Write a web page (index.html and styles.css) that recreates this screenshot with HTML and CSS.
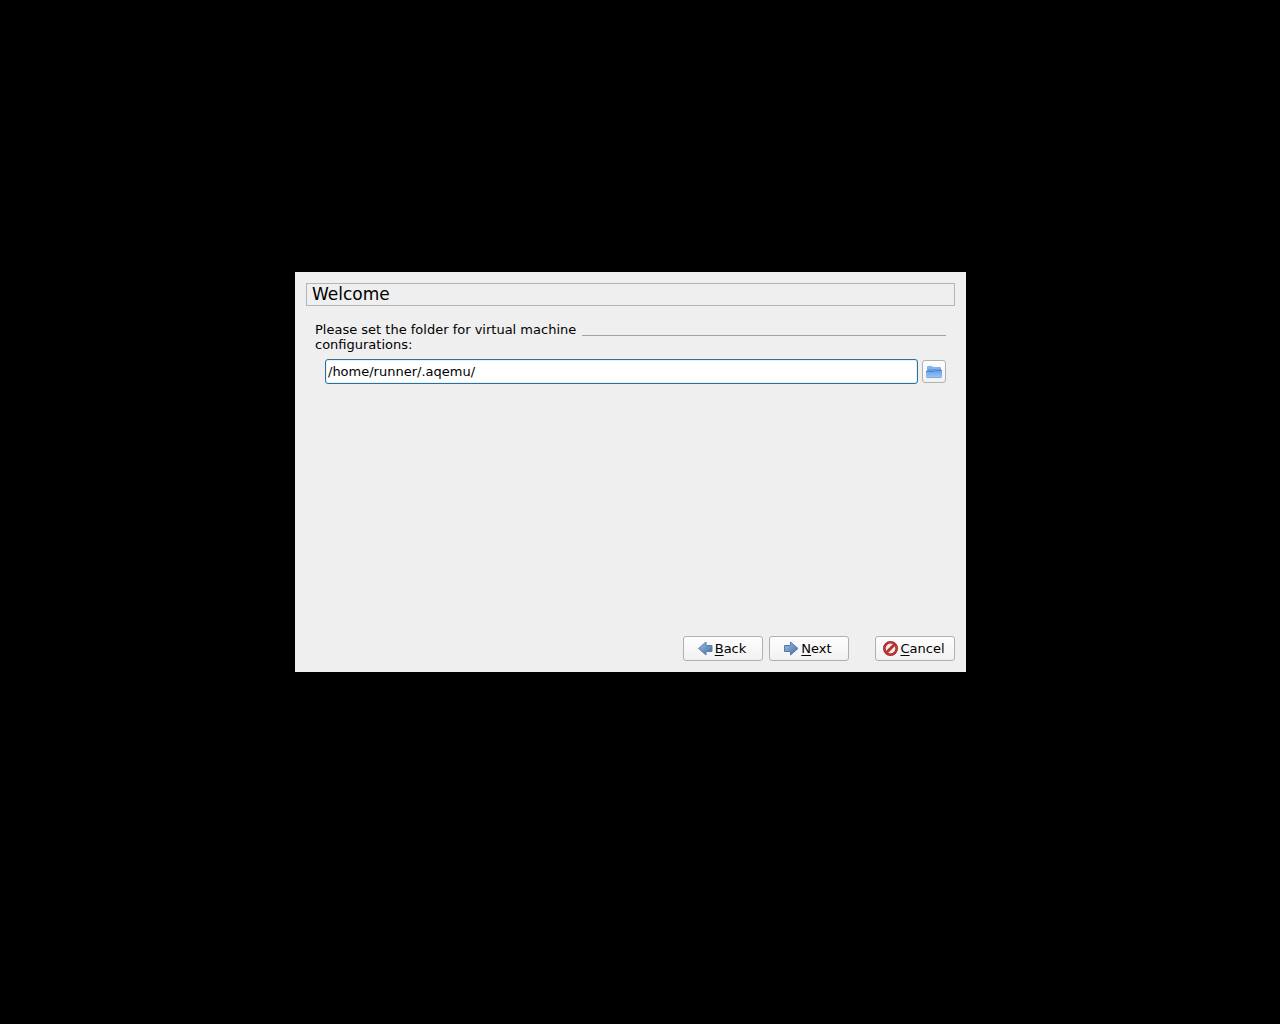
FILE: index.html
```html
<!DOCTYPE html>
<html lang="en">
<head>
<meta charset="utf-8">
<meta name="viewport" content="width=device-width, initial-scale=1">
<title>Welcome</title>
<link rel="stylesheet" href="styles.css">
</head>
<body>
<form class="wizard">
  <h1 class="title">Welcome</h1>
  <main class="page">
    <div class="caption">
      <label class="caption-text" for="folder">Please set the folder for virtual machine configurations:</label>
      <span class="rule"></span>
    </div>
    <div class="path-row">
      <input class="path" id="folder" type="text" value="/home/runner/.aqemu/">
      <button class="button browse" type="button" aria-label="Browse">
        <svg class="icon" viewBox="0 0 16 16" aria-hidden="true">
          <defs>
            <linearGradient id="folder-fill" x1="0" y1="0" x2="0" y2="1"><stop offset="0" stop-color="#6ba2e6"/><stop offset="1" stop-color="#9dc8fa"/></linearGradient>
          </defs>
          <path d="M1 13V3q0-1 1-1h4l1 1h7q1 0 1 1v9z" fill="#84b4ee"/>
          <path d="M1 5h14v2H1z" fill="#6a9ee0"/>
          <path d="M0 8h7l1-1h8v6q0 1-1 1H1q-1 0-1-1z" fill="url(#folder-fill)"/>
          <path d="M0 7.500h7.500l1-1H16" fill="none" stroke="#4c83cc"/>
          <path d="M1 13.500h14" stroke="#7eaae2"/>
        </svg>
      </button>
    </div>
  </main>
  <footer class="actions">
    <button class="button" type="button">
      <svg class="icon" viewBox="0 0 16 16" aria-hidden="true">
        <defs>
          <linearGradient id="arrow-fill" x1="0" y1="0" x2="1" y2="1"><stop offset="0" stop-color="#a4c2e2"/><stop offset=".5" stop-color="#6f97c6"/><stop offset="1" stop-color="#3e659b"/></linearGradient>
        </defs>
        <path d="M.5 7.500l7.500-6.500V4.500h6v6h-6V14z" fill="url(#arrow-fill)" stroke="#5c7fa8" stroke-linejoin="round"/>
      </svg>
      <span><u>B</u>ack</span>
    </button>
    <button class="button" type="button">
      <svg class="icon" viewBox="0 0 16 16" aria-hidden="true">
        <path d="M14 7.500L6.500 1V4.500h-6v6h6V14z" fill="url(#arrow-fill)" stroke="#5c78a8" stroke-linejoin="round"/>
      </svg>
      <span><u>N</u>ext</span>
    </button>
    <button class="button cancel" type="button">
      <svg class="icon" viewBox="0 0 16 16" aria-hidden="true">
        <circle cx="7.500" cy="7.500" r="6.200" fill="#f6ecec" stroke="#a5201f" stroke-width="2.600"/>
        <path d="M3.500 11.500l8-8" stroke="#bb302e" stroke-width="2.800"/>
        <circle cx="7.500" cy="7.500" r="6.200" fill="none" stroke="#cc4a47" stroke-width=".8"/>
      </svg>
      <span><u>C</u>ancel</span>
    </button>
  </footer>
</form>
</body>
</html>
```
FILE: styles.css
```css
* {
  box-sizing: border-box;
}

body {
  display: flex;
  align-items: center;
  justify-content: center;
  min-height: 100vh;
  margin: 0;
  padding: 0 19px 80px 0;
  background: #000;
  color: #000;
  font: 13px/15px "DejaVu Sans", sans-serif;
}

.wizard {
  display: flex;
  flex-direction: column;
  width: 100%;
  max-width: 671px;
  min-height: 400px;
  padding: 11px;
  background: #efefef;
}

.title {
  margin: 0;
  padding: 0 5px;
  border: 1px solid #b4b4b4;
  font-size: 17px;
  font-weight: 400;
  line-height: 21px;
}

.page {
  flex: 1;
  padding: 16px 9px;
}

.caption {
  display: flex;
  gap: 3px;
}

.caption-text {
  max-width: 264px;
}

.rule {
  flex: 1;
  height: 14px;
  border-bottom: 1px solid #a2a2a2;
}

.path-row {
  display: flex;
  align-items: center;
  gap: 4px;
  margin-top: 7px;
  padding-left: 10px;
}

.path {
  flex: 1;
  min-width: 0;
  height: 25px;
  padding: 0 2px;
  border: 1px solid #2f6f98;
  border-radius: 3px;
  outline: 0;
  background: #fff;
  box-shadow: inset 0 0 0 1px #dff3fa;
  color: inherit;
  font: inherit;
}

.button {
  display: flex;
  align-items: center;
  justify-content: center;
  gap: 1px;
  min-width: 80px;
  height: 25px;
  padding: 0 4px 0 2px;
  border: 1px solid #b0b0b0;
  border-radius: 3px;
  background: linear-gradient(#fefefe, #f1f1f1);
  color: inherit;
  font: inherit;
}

.browse {
  min-width: 24px;
  height: 23px;
  padding: 0;
}

.icon {
  flex: none;
  width: 16px;
  height: 16px;
}

.actions {
  display: flex;
  justify-content: flex-end;
  gap: 6px;
}

.cancel {
  margin-left: 20px;
}

u {
  text-underline-offset: 2px;
}
```
